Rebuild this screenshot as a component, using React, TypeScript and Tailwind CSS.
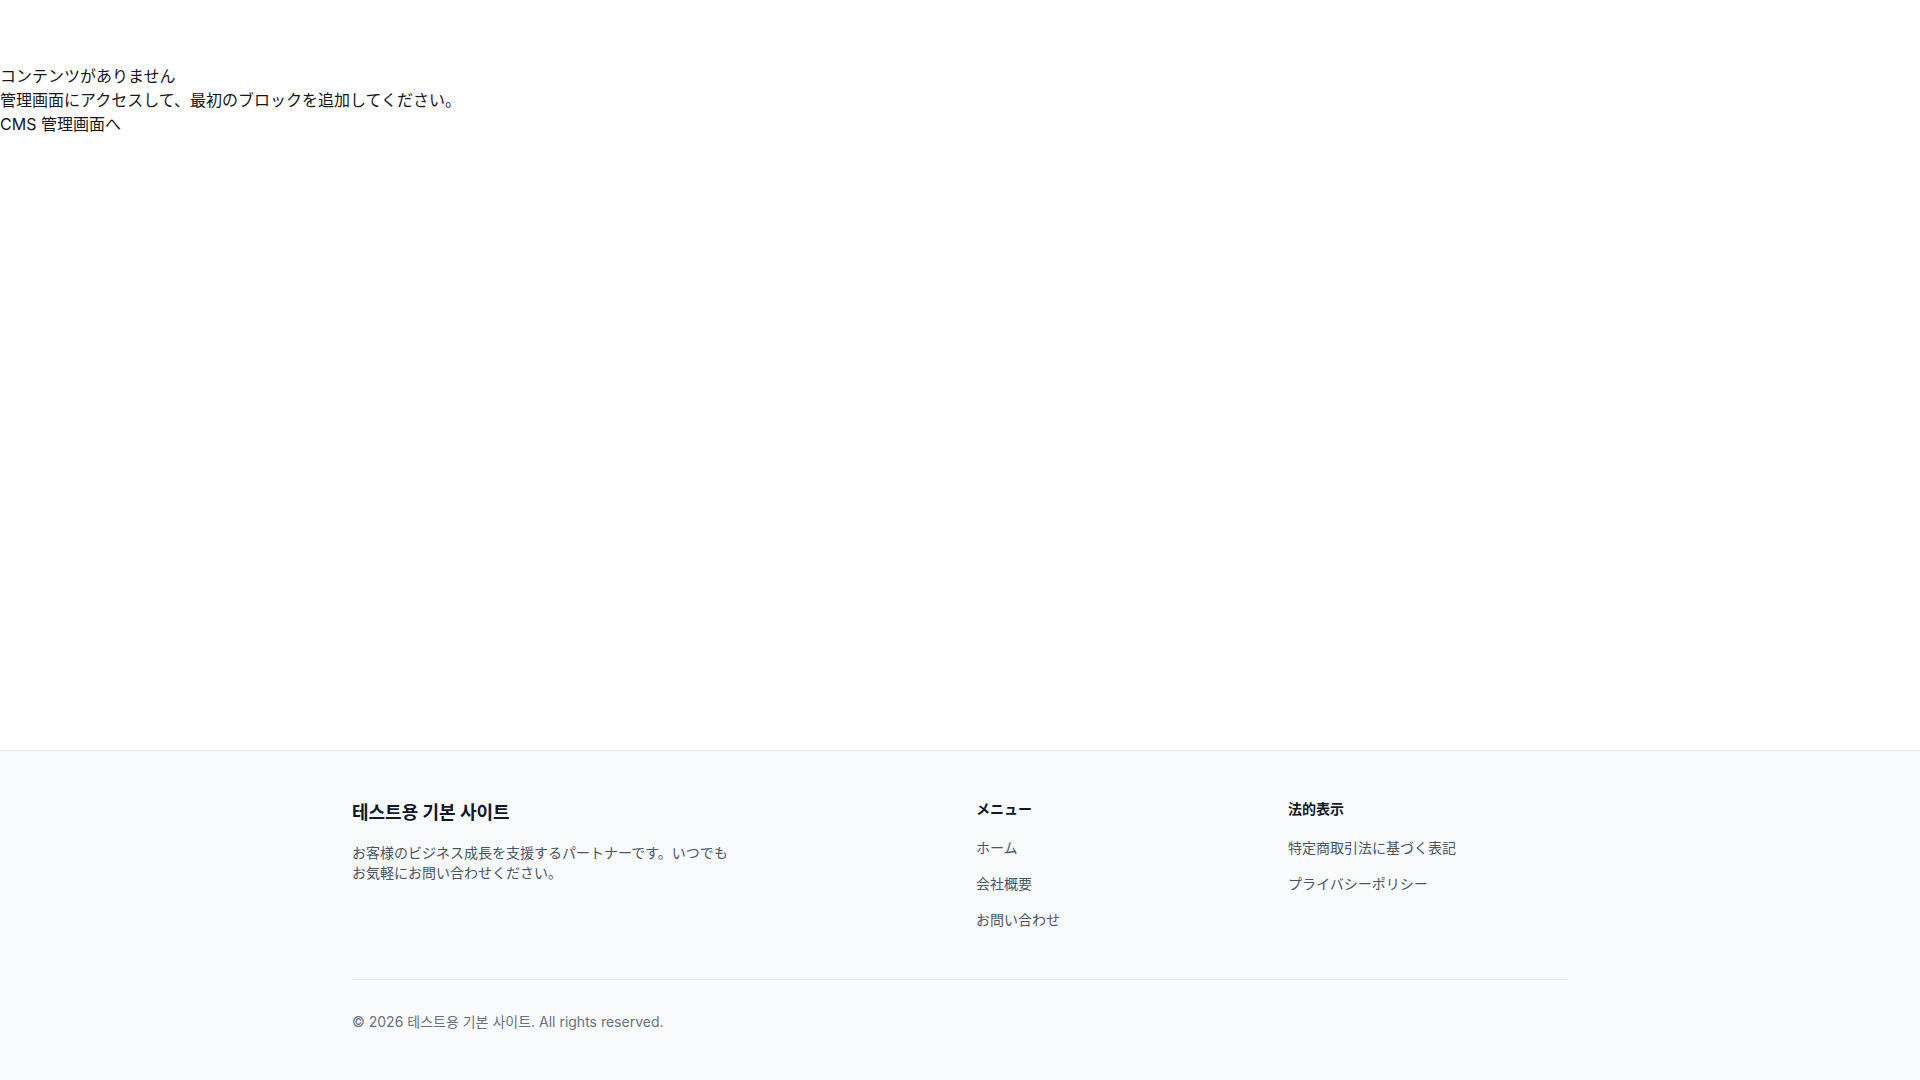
const menuLinks = ["ホーム", "会社概要", "お問い合わせ"];
const legalLinks = ["特定商取引法に基づく表記", "プライバシーポリシー"];

const App: React.FC = () => {
  return (
    <div className="min-h-screen flex flex-col bg-white font-['Inter','Noto_Sans_CJK_JP','Noto_Sans_CJK_KR',sans-serif]">
      <main className="flex-1 pt-16 text-base text-[#171717]">
        <p>コンテンツがありません</p>
        <p>管理画面にアクセスして、最初のブロックを追加してください。</p>
        <a href="#">CMS 管理画面へ</a>
      </main>

      <footer className="bg-gray-50 border-t border-gray-200">
        <div className="max-w-7xl mx-auto px-8 py-12">
          <div className="grid grid-cols-4 gap-8">
            <div className="col-span-2">
              <h2 className="text-lg font-bold text-gray-900 mb-4">
                테스트용 기본 사이트
              </h2>
              <p className="text-sm text-gray-600 max-w-sm">
                お客様のビジネス成長を支援するパートナーです。いつでもお気軽にお問い合わせください。
              </p>
            </div>

            <div>
              <h3 className="text-sm font-semibold text-gray-900 mb-4">
                メニュー
              </h3>
              <ul className="space-y-3">
                {menuLinks.map((l) => (
                  <li key={l}>
                    <a href="#" className="text-sm text-gray-600">
                      {l}
                    </a>
                  </li>
                ))}
              </ul>
            </div>

            <div>
              <h3 className="text-sm font-semibold text-gray-900 mb-4">
                法的表示
              </h3>
              <ul className="space-y-3">
                {legalLinks.map((l) => (
                  <li key={l}>
                    <a href="#" className="text-sm text-gray-600">
                      {l}
                    </a>
                  </li>
                ))}
              </ul>
            </div>
          </div>

          <div className="mt-12 pt-8 border-t border-gray-200">
            <p className="text-sm text-gray-500">
              © 2026 테스트용 기본 사이트. All rights reserved.
            </p>
          </div>
        </div>
      </footer>
    </div>
  );
};

export default App;
